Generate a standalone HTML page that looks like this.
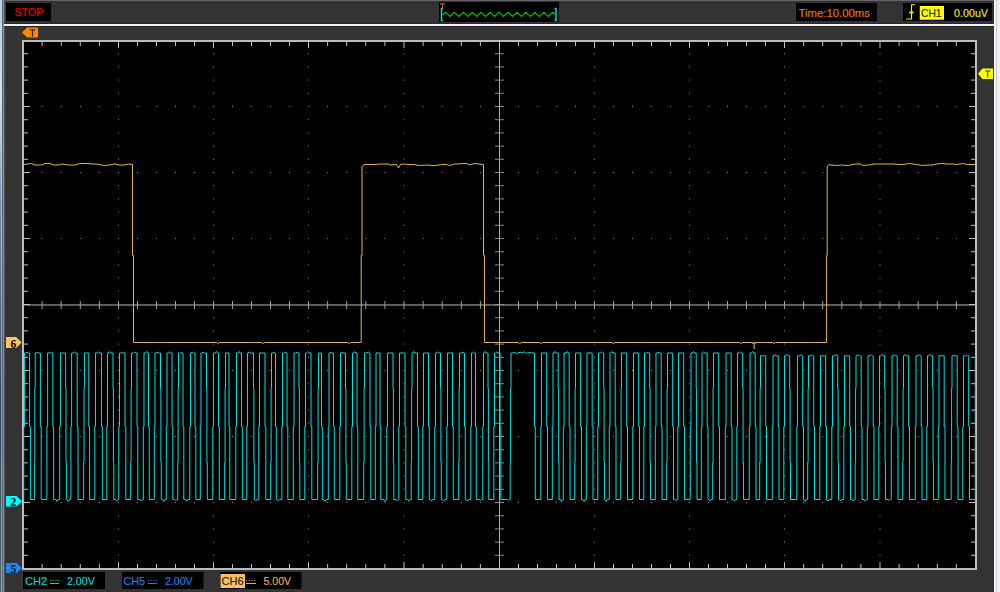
<!DOCTYPE html>
<html><head><meta charset="utf-8">
<style>
html,body{margin:0;padding:0}
body{width:1000px;height:592px;overflow:hidden;background:#333;position:relative;font-family:"Liberation Sans",sans-serif}
.a{position:absolute}
svg{position:absolute;left:0;top:0}
</style></head><body>
<div class="a" style="left:0;top:0;width:1px;height:592px;background:linear-gradient(#b8cce4,#dce4ec 100px,#7890a8 200px,#304860 400px,#506070)"></div>
<div class="a" style="left:1px;top:0;width:1px;height:592px;background:linear-gradient(#c8d4e0,#d0d8e0 100px,#a8b8c8 200px,#8898a8 400px,#98a0a8)"></div>
<div class="a" style="left:2px;top:0;width:1px;height:592px;background:#5a6878"></div>
<div class="a" style="left:3px;top:0;width:1px;height:592px;background:#8c8c8c"></div>
<div class="a" style="left:4px;top:0;width:1px;height:592px;background:#505050"></div>
<div class="a" style="left:5px;top:0;width:1px;height:592px;background:#3a3a3a"></div>
<div class="a" style="left:4px;top:0;width:990px;height:1px;background:#666"></div>
<div class="a" style="left:4px;top:23px;width:990px;height:1px;background:#2a2a2a"></div>
<div class="a" style="left:4px;top:24px;width:990px;height:2px;background:#f0f0f0"></div>
<div class="a" style="left:4px;top:26px;width:990px;height:1px;background:#282828"></div>
<div class="a" style="left:994px;top:0;width:2px;height:592px;background:#f4f4f4"></div>
<div class="a" style="left:996px;top:0;width:1px;height:592px;background:#c8ccd4"></div>
<div class="a" style="left:997px;top:0;width:3px;height:592px;background:#f0f0f0"></div>
<svg width="1000" height="592" viewBox="0 0 1000 592">
<!-- top boxes -->
<rect x="6" y="3" width="45" height="18" fill="#000"/>
<text x="14.6" y="16" font-size="10.6" fill="#e80000" stroke="#e80000" stroke-width="0.2" textLength="28.6" lengthAdjust="spacingAndGlyphs">STOP</text>
<rect x="439" y="2" width="120" height="20" fill="#000"/>
<path d="M440 3.8H445M442.6 3.8V8" stroke="#c06000" stroke-width="1.3" fill="none"/>
<path d="M443 8.5H441.5V20.5H443M554.5 8.5H556V20.5H554.5" stroke="#00d8e8" stroke-width="1.5" fill="none"/>
<path d="M442.5 15 L445.5 12.25 L449.97 16.5 L454.44 12.25 L458.91 16.5 L463.38 12.25 L467.85 16.5 L472.32 12.25 L476.79 16.5 L481.26 12.25 L485.73 16.5 L490.2 12.25 L494.67 16.5 L499.14 12.25 L503.61 16.5 L508.08 12.25 L512.55 16.5 L517.02 12.25 L521.49 16.5 L525.96 12.25 L530.43 16.5 L534.9 12.25 L539.37 16.5 L543.84 12.25 L548.31 16.5 L552.78 12.25 L557.25 16.5" stroke="#00c000" stroke-width="1.1" fill="none"/>
<rect x="796" y="3" width="81" height="18" fill="#000"/>
<text x="798.5" y="16.5" font-size="10.5" fill="#e87800" stroke="#e87800" stroke-width="0.15" textLength="71.5" lengthAdjust="spacingAndGlyphs">Time:10.00ms</text>
<rect x="903" y="3" width="89" height="18" fill="#000"/>
<path d="M915 4.75H911.5V19H906.25" stroke="#f0f000" stroke-width="1.2" fill="none"/>
<path d="M911.5 10.5L914.5 13.2H908.25Z" fill="#f0f000"/>
<rect x="919.75" y="6" width="24.25" height="13.75" fill="#ffff00"/>
<text x="921" y="16.75" font-size="10.5" fill="#202000" stroke="#202000" stroke-width="0.15" textLength="20.5" lengthAdjust="spacingAndGlyphs">CH1</text>
<text x="954" y="16.75" font-size="10.5" fill="#e8e800" stroke="#e8e800" stroke-width="0.15" textLength="34" lengthAdjust="spacingAndGlyphs">0.00uV</text>
<!-- plot -->
<rect x="24" y="42" width="951" height="526" fill="#000"/>
<rect x="118" y="53.2" width="1" height="1" fill="#8a8a8a"/>
<rect x="118" y="66.4" width="1" height="1" fill="#8a8a8a"/>
<rect x="118" y="79.6" width="1" height="1" fill="#8a8a8a"/>
<rect x="118" y="92.8" width="1" height="1" fill="#8a8a8a"/>
<rect x="118" y="106" width="1" height="1" fill="#8a8a8a"/>
<rect x="118" y="119.2" width="1" height="1" fill="#8a8a8a"/>
<rect x="118" y="132.4" width="1" height="1" fill="#8a8a8a"/>
<rect x="118" y="145.6" width="1" height="1" fill="#8a8a8a"/>
<rect x="118" y="158.8" width="1" height="1" fill="#8a8a8a"/>
<rect x="118" y="172" width="1" height="1" fill="#8a8a8a"/>
<rect x="118" y="185.2" width="1" height="1" fill="#8a8a8a"/>
<rect x="118" y="198.4" width="1" height="1" fill="#8a8a8a"/>
<rect x="118" y="211.6" width="1" height="1" fill="#8a8a8a"/>
<rect x="118" y="224.8" width="1" height="1" fill="#8a8a8a"/>
<rect x="118" y="238" width="1" height="1" fill="#8a8a8a"/>
<rect x="118" y="251.2" width="1" height="1" fill="#8a8a8a"/>
<rect x="118" y="264.4" width="1" height="1" fill="#8a8a8a"/>
<rect x="118" y="277.6" width="1" height="1" fill="#8a8a8a"/>
<rect x="118" y="290.8" width="1" height="1" fill="#8a8a8a"/>
<rect x="118" y="304" width="1" height="1" fill="#8a8a8a"/>
<rect x="118" y="317.2" width="1" height="1" fill="#8a8a8a"/>
<rect x="118" y="330.4" width="1" height="1" fill="#8a8a8a"/>
<rect x="118" y="343.6" width="1" height="1" fill="#8a8a8a"/>
<rect x="118" y="356.8" width="1" height="1" fill="#8a8a8a"/>
<rect x="118" y="370" width="1" height="1" fill="#8a8a8a"/>
<rect x="118" y="383.2" width="1" height="1" fill="#8a8a8a"/>
<rect x="118" y="396.4" width="1" height="1" fill="#8a8a8a"/>
<rect x="118" y="409.6" width="1" height="1" fill="#8a8a8a"/>
<rect x="118" y="422.8" width="1" height="1" fill="#8a8a8a"/>
<rect x="118" y="436" width="1" height="1" fill="#8a8a8a"/>
<rect x="118" y="449.2" width="1" height="1" fill="#8a8a8a"/>
<rect x="118" y="462.4" width="1" height="1" fill="#8a8a8a"/>
<rect x="118" y="475.6" width="1" height="1" fill="#8a8a8a"/>
<rect x="118" y="488.8" width="1" height="1" fill="#8a8a8a"/>
<rect x="118" y="502" width="1" height="1" fill="#8a8a8a"/>
<rect x="118" y="515.2" width="1" height="1" fill="#8a8a8a"/>
<rect x="118" y="528.4" width="1" height="1" fill="#8a8a8a"/>
<rect x="118" y="541.6" width="1" height="1" fill="#8a8a8a"/>
<rect x="118" y="554.8" width="1" height="1" fill="#8a8a8a"/>
<rect x="213" y="53.2" width="1" height="1" fill="#8a8a8a"/>
<rect x="213" y="66.4" width="1" height="1" fill="#8a8a8a"/>
<rect x="213" y="79.6" width="1" height="1" fill="#8a8a8a"/>
<rect x="213" y="92.8" width="1" height="1" fill="#8a8a8a"/>
<rect x="213" y="106" width="1" height="1" fill="#8a8a8a"/>
<rect x="213" y="119.2" width="1" height="1" fill="#8a8a8a"/>
<rect x="213" y="132.4" width="1" height="1" fill="#8a8a8a"/>
<rect x="213" y="145.6" width="1" height="1" fill="#8a8a8a"/>
<rect x="213" y="158.8" width="1" height="1" fill="#8a8a8a"/>
<rect x="213" y="172" width="1" height="1" fill="#8a8a8a"/>
<rect x="213" y="185.2" width="1" height="1" fill="#8a8a8a"/>
<rect x="213" y="198.4" width="1" height="1" fill="#8a8a8a"/>
<rect x="213" y="211.6" width="1" height="1" fill="#8a8a8a"/>
<rect x="213" y="224.8" width="1" height="1" fill="#8a8a8a"/>
<rect x="213" y="238" width="1" height="1" fill="#8a8a8a"/>
<rect x="213" y="251.2" width="1" height="1" fill="#8a8a8a"/>
<rect x="213" y="264.4" width="1" height="1" fill="#8a8a8a"/>
<rect x="213" y="277.6" width="1" height="1" fill="#8a8a8a"/>
<rect x="213" y="290.8" width="1" height="1" fill="#8a8a8a"/>
<rect x="213" y="304" width="1" height="1" fill="#8a8a8a"/>
<rect x="213" y="317.2" width="1" height="1" fill="#8a8a8a"/>
<rect x="213" y="330.4" width="1" height="1" fill="#8a8a8a"/>
<rect x="213" y="343.6" width="1" height="1" fill="#8a8a8a"/>
<rect x="213" y="356.8" width="1" height="1" fill="#8a8a8a"/>
<rect x="213" y="370" width="1" height="1" fill="#8a8a8a"/>
<rect x="213" y="383.2" width="1" height="1" fill="#8a8a8a"/>
<rect x="213" y="396.4" width="1" height="1" fill="#8a8a8a"/>
<rect x="213" y="409.6" width="1" height="1" fill="#8a8a8a"/>
<rect x="213" y="422.8" width="1" height="1" fill="#8a8a8a"/>
<rect x="213" y="436" width="1" height="1" fill="#8a8a8a"/>
<rect x="213" y="449.2" width="1" height="1" fill="#8a8a8a"/>
<rect x="213" y="462.4" width="1" height="1" fill="#8a8a8a"/>
<rect x="213" y="475.6" width="1" height="1" fill="#8a8a8a"/>
<rect x="213" y="488.8" width="1" height="1" fill="#8a8a8a"/>
<rect x="213" y="502" width="1" height="1" fill="#8a8a8a"/>
<rect x="213" y="515.2" width="1" height="1" fill="#8a8a8a"/>
<rect x="213" y="528.4" width="1" height="1" fill="#8a8a8a"/>
<rect x="213" y="541.6" width="1" height="1" fill="#8a8a8a"/>
<rect x="213" y="554.8" width="1" height="1" fill="#8a8a8a"/>
<rect x="308" y="53.2" width="1" height="1" fill="#8a8a8a"/>
<rect x="308" y="66.4" width="1" height="1" fill="#8a8a8a"/>
<rect x="308" y="79.6" width="1" height="1" fill="#8a8a8a"/>
<rect x="308" y="92.8" width="1" height="1" fill="#8a8a8a"/>
<rect x="308" y="106" width="1" height="1" fill="#8a8a8a"/>
<rect x="308" y="119.2" width="1" height="1" fill="#8a8a8a"/>
<rect x="308" y="132.4" width="1" height="1" fill="#8a8a8a"/>
<rect x="308" y="145.6" width="1" height="1" fill="#8a8a8a"/>
<rect x="308" y="158.8" width="1" height="1" fill="#8a8a8a"/>
<rect x="308" y="172" width="1" height="1" fill="#8a8a8a"/>
<rect x="308" y="185.2" width="1" height="1" fill="#8a8a8a"/>
<rect x="308" y="198.4" width="1" height="1" fill="#8a8a8a"/>
<rect x="308" y="211.6" width="1" height="1" fill="#8a8a8a"/>
<rect x="308" y="224.8" width="1" height="1" fill="#8a8a8a"/>
<rect x="308" y="238" width="1" height="1" fill="#8a8a8a"/>
<rect x="308" y="251.2" width="1" height="1" fill="#8a8a8a"/>
<rect x="308" y="264.4" width="1" height="1" fill="#8a8a8a"/>
<rect x="308" y="277.6" width="1" height="1" fill="#8a8a8a"/>
<rect x="308" y="290.8" width="1" height="1" fill="#8a8a8a"/>
<rect x="308" y="304" width="1" height="1" fill="#8a8a8a"/>
<rect x="308" y="317.2" width="1" height="1" fill="#8a8a8a"/>
<rect x="308" y="330.4" width="1" height="1" fill="#8a8a8a"/>
<rect x="308" y="343.6" width="1" height="1" fill="#8a8a8a"/>
<rect x="308" y="356.8" width="1" height="1" fill="#8a8a8a"/>
<rect x="308" y="370" width="1" height="1" fill="#8a8a8a"/>
<rect x="308" y="383.2" width="1" height="1" fill="#8a8a8a"/>
<rect x="308" y="396.4" width="1" height="1" fill="#8a8a8a"/>
<rect x="308" y="409.6" width="1" height="1" fill="#8a8a8a"/>
<rect x="308" y="422.8" width="1" height="1" fill="#8a8a8a"/>
<rect x="308" y="436" width="1" height="1" fill="#8a8a8a"/>
<rect x="308" y="449.2" width="1" height="1" fill="#8a8a8a"/>
<rect x="308" y="462.4" width="1" height="1" fill="#8a8a8a"/>
<rect x="308" y="475.6" width="1" height="1" fill="#8a8a8a"/>
<rect x="308" y="488.8" width="1" height="1" fill="#8a8a8a"/>
<rect x="308" y="502" width="1" height="1" fill="#8a8a8a"/>
<rect x="308" y="515.2" width="1" height="1" fill="#8a8a8a"/>
<rect x="308" y="528.4" width="1" height="1" fill="#8a8a8a"/>
<rect x="308" y="541.6" width="1" height="1" fill="#8a8a8a"/>
<rect x="308" y="554.8" width="1" height="1" fill="#8a8a8a"/>
<rect x="403.5" y="53.2" width="1" height="1" fill="#8a8a8a"/>
<rect x="403.5" y="66.4" width="1" height="1" fill="#8a8a8a"/>
<rect x="403.5" y="79.6" width="1" height="1" fill="#8a8a8a"/>
<rect x="403.5" y="92.8" width="1" height="1" fill="#8a8a8a"/>
<rect x="403.5" y="106" width="1" height="1" fill="#8a8a8a"/>
<rect x="403.5" y="119.2" width="1" height="1" fill="#8a8a8a"/>
<rect x="403.5" y="132.4" width="1" height="1" fill="#8a8a8a"/>
<rect x="403.5" y="145.6" width="1" height="1" fill="#8a8a8a"/>
<rect x="403.5" y="158.8" width="1" height="1" fill="#8a8a8a"/>
<rect x="403.5" y="172" width="1" height="1" fill="#8a8a8a"/>
<rect x="403.5" y="185.2" width="1" height="1" fill="#8a8a8a"/>
<rect x="403.5" y="198.4" width="1" height="1" fill="#8a8a8a"/>
<rect x="403.5" y="211.6" width="1" height="1" fill="#8a8a8a"/>
<rect x="403.5" y="224.8" width="1" height="1" fill="#8a8a8a"/>
<rect x="403.5" y="238" width="1" height="1" fill="#8a8a8a"/>
<rect x="403.5" y="251.2" width="1" height="1" fill="#8a8a8a"/>
<rect x="403.5" y="264.4" width="1" height="1" fill="#8a8a8a"/>
<rect x="403.5" y="277.6" width="1" height="1" fill="#8a8a8a"/>
<rect x="403.5" y="290.8" width="1" height="1" fill="#8a8a8a"/>
<rect x="403.5" y="304" width="1" height="1" fill="#8a8a8a"/>
<rect x="403.5" y="317.2" width="1" height="1" fill="#8a8a8a"/>
<rect x="403.5" y="330.4" width="1" height="1" fill="#8a8a8a"/>
<rect x="403.5" y="343.6" width="1" height="1" fill="#8a8a8a"/>
<rect x="403.5" y="356.8" width="1" height="1" fill="#8a8a8a"/>
<rect x="403.5" y="370" width="1" height="1" fill="#8a8a8a"/>
<rect x="403.5" y="383.2" width="1" height="1" fill="#8a8a8a"/>
<rect x="403.5" y="396.4" width="1" height="1" fill="#8a8a8a"/>
<rect x="403.5" y="409.6" width="1" height="1" fill="#8a8a8a"/>
<rect x="403.5" y="422.8" width="1" height="1" fill="#8a8a8a"/>
<rect x="403.5" y="436" width="1" height="1" fill="#8a8a8a"/>
<rect x="403.5" y="449.2" width="1" height="1" fill="#8a8a8a"/>
<rect x="403.5" y="462.4" width="1" height="1" fill="#8a8a8a"/>
<rect x="403.5" y="475.6" width="1" height="1" fill="#8a8a8a"/>
<rect x="403.5" y="488.8" width="1" height="1" fill="#8a8a8a"/>
<rect x="403.5" y="502" width="1" height="1" fill="#8a8a8a"/>
<rect x="403.5" y="515.2" width="1" height="1" fill="#8a8a8a"/>
<rect x="403.5" y="528.4" width="1" height="1" fill="#8a8a8a"/>
<rect x="403.5" y="541.6" width="1" height="1" fill="#8a8a8a"/>
<rect x="403.5" y="554.8" width="1" height="1" fill="#8a8a8a"/>
<rect x="594" y="53.2" width="1" height="1" fill="#8a8a8a"/>
<rect x="594" y="66.4" width="1" height="1" fill="#8a8a8a"/>
<rect x="594" y="79.6" width="1" height="1" fill="#8a8a8a"/>
<rect x="594" y="92.8" width="1" height="1" fill="#8a8a8a"/>
<rect x="594" y="106" width="1" height="1" fill="#8a8a8a"/>
<rect x="594" y="119.2" width="1" height="1" fill="#8a8a8a"/>
<rect x="594" y="132.4" width="1" height="1" fill="#8a8a8a"/>
<rect x="594" y="145.6" width="1" height="1" fill="#8a8a8a"/>
<rect x="594" y="158.8" width="1" height="1" fill="#8a8a8a"/>
<rect x="594" y="172" width="1" height="1" fill="#8a8a8a"/>
<rect x="594" y="185.2" width="1" height="1" fill="#8a8a8a"/>
<rect x="594" y="198.4" width="1" height="1" fill="#8a8a8a"/>
<rect x="594" y="211.6" width="1" height="1" fill="#8a8a8a"/>
<rect x="594" y="224.8" width="1" height="1" fill="#8a8a8a"/>
<rect x="594" y="238" width="1" height="1" fill="#8a8a8a"/>
<rect x="594" y="251.2" width="1" height="1" fill="#8a8a8a"/>
<rect x="594" y="264.4" width="1" height="1" fill="#8a8a8a"/>
<rect x="594" y="277.6" width="1" height="1" fill="#8a8a8a"/>
<rect x="594" y="290.8" width="1" height="1" fill="#8a8a8a"/>
<rect x="594" y="304" width="1" height="1" fill="#8a8a8a"/>
<rect x="594" y="317.2" width="1" height="1" fill="#8a8a8a"/>
<rect x="594" y="330.4" width="1" height="1" fill="#8a8a8a"/>
<rect x="594" y="343.6" width="1" height="1" fill="#8a8a8a"/>
<rect x="594" y="356.8" width="1" height="1" fill="#8a8a8a"/>
<rect x="594" y="370" width="1" height="1" fill="#8a8a8a"/>
<rect x="594" y="383.2" width="1" height="1" fill="#8a8a8a"/>
<rect x="594" y="396.4" width="1" height="1" fill="#8a8a8a"/>
<rect x="594" y="409.6" width="1" height="1" fill="#8a8a8a"/>
<rect x="594" y="422.8" width="1" height="1" fill="#8a8a8a"/>
<rect x="594" y="436" width="1" height="1" fill="#8a8a8a"/>
<rect x="594" y="449.2" width="1" height="1" fill="#8a8a8a"/>
<rect x="594" y="462.4" width="1" height="1" fill="#8a8a8a"/>
<rect x="594" y="475.6" width="1" height="1" fill="#8a8a8a"/>
<rect x="594" y="488.8" width="1" height="1" fill="#8a8a8a"/>
<rect x="594" y="502" width="1" height="1" fill="#8a8a8a"/>
<rect x="594" y="515.2" width="1" height="1" fill="#8a8a8a"/>
<rect x="594" y="528.4" width="1" height="1" fill="#8a8a8a"/>
<rect x="594" y="541.6" width="1" height="1" fill="#8a8a8a"/>
<rect x="594" y="554.8" width="1" height="1" fill="#8a8a8a"/>
<rect x="689" y="53.2" width="1" height="1" fill="#8a8a8a"/>
<rect x="689" y="66.4" width="1" height="1" fill="#8a8a8a"/>
<rect x="689" y="79.6" width="1" height="1" fill="#8a8a8a"/>
<rect x="689" y="92.8" width="1" height="1" fill="#8a8a8a"/>
<rect x="689" y="106" width="1" height="1" fill="#8a8a8a"/>
<rect x="689" y="119.2" width="1" height="1" fill="#8a8a8a"/>
<rect x="689" y="132.4" width="1" height="1" fill="#8a8a8a"/>
<rect x="689" y="145.6" width="1" height="1" fill="#8a8a8a"/>
<rect x="689" y="158.8" width="1" height="1" fill="#8a8a8a"/>
<rect x="689" y="172" width="1" height="1" fill="#8a8a8a"/>
<rect x="689" y="185.2" width="1" height="1" fill="#8a8a8a"/>
<rect x="689" y="198.4" width="1" height="1" fill="#8a8a8a"/>
<rect x="689" y="211.6" width="1" height="1" fill="#8a8a8a"/>
<rect x="689" y="224.8" width="1" height="1" fill="#8a8a8a"/>
<rect x="689" y="238" width="1" height="1" fill="#8a8a8a"/>
<rect x="689" y="251.2" width="1" height="1" fill="#8a8a8a"/>
<rect x="689" y="264.4" width="1" height="1" fill="#8a8a8a"/>
<rect x="689" y="277.6" width="1" height="1" fill="#8a8a8a"/>
<rect x="689" y="290.8" width="1" height="1" fill="#8a8a8a"/>
<rect x="689" y="304" width="1" height="1" fill="#8a8a8a"/>
<rect x="689" y="317.2" width="1" height="1" fill="#8a8a8a"/>
<rect x="689" y="330.4" width="1" height="1" fill="#8a8a8a"/>
<rect x="689" y="343.6" width="1" height="1" fill="#8a8a8a"/>
<rect x="689" y="356.8" width="1" height="1" fill="#8a8a8a"/>
<rect x="689" y="370" width="1" height="1" fill="#8a8a8a"/>
<rect x="689" y="383.2" width="1" height="1" fill="#8a8a8a"/>
<rect x="689" y="396.4" width="1" height="1" fill="#8a8a8a"/>
<rect x="689" y="409.6" width="1" height="1" fill="#8a8a8a"/>
<rect x="689" y="422.8" width="1" height="1" fill="#8a8a8a"/>
<rect x="689" y="436" width="1" height="1" fill="#8a8a8a"/>
<rect x="689" y="449.2" width="1" height="1" fill="#8a8a8a"/>
<rect x="689" y="462.4" width="1" height="1" fill="#8a8a8a"/>
<rect x="689" y="475.6" width="1" height="1" fill="#8a8a8a"/>
<rect x="689" y="488.8" width="1" height="1" fill="#8a8a8a"/>
<rect x="689" y="502" width="1" height="1" fill="#8a8a8a"/>
<rect x="689" y="515.2" width="1" height="1" fill="#8a8a8a"/>
<rect x="689" y="528.4" width="1" height="1" fill="#8a8a8a"/>
<rect x="689" y="541.6" width="1" height="1" fill="#8a8a8a"/>
<rect x="689" y="554.8" width="1" height="1" fill="#8a8a8a"/>
<rect x="784" y="53.2" width="1" height="1" fill="#8a8a8a"/>
<rect x="784" y="66.4" width="1" height="1" fill="#8a8a8a"/>
<rect x="784" y="79.6" width="1" height="1" fill="#8a8a8a"/>
<rect x="784" y="92.8" width="1" height="1" fill="#8a8a8a"/>
<rect x="784" y="106" width="1" height="1" fill="#8a8a8a"/>
<rect x="784" y="119.2" width="1" height="1" fill="#8a8a8a"/>
<rect x="784" y="132.4" width="1" height="1" fill="#8a8a8a"/>
<rect x="784" y="145.6" width="1" height="1" fill="#8a8a8a"/>
<rect x="784" y="158.8" width="1" height="1" fill="#8a8a8a"/>
<rect x="784" y="172" width="1" height="1" fill="#8a8a8a"/>
<rect x="784" y="185.2" width="1" height="1" fill="#8a8a8a"/>
<rect x="784" y="198.4" width="1" height="1" fill="#8a8a8a"/>
<rect x="784" y="211.6" width="1" height="1" fill="#8a8a8a"/>
<rect x="784" y="224.8" width="1" height="1" fill="#8a8a8a"/>
<rect x="784" y="238" width="1" height="1" fill="#8a8a8a"/>
<rect x="784" y="251.2" width="1" height="1" fill="#8a8a8a"/>
<rect x="784" y="264.4" width="1" height="1" fill="#8a8a8a"/>
<rect x="784" y="277.6" width="1" height="1" fill="#8a8a8a"/>
<rect x="784" y="290.8" width="1" height="1" fill="#8a8a8a"/>
<rect x="784" y="304" width="1" height="1" fill="#8a8a8a"/>
<rect x="784" y="317.2" width="1" height="1" fill="#8a8a8a"/>
<rect x="784" y="330.4" width="1" height="1" fill="#8a8a8a"/>
<rect x="784" y="343.6" width="1" height="1" fill="#8a8a8a"/>
<rect x="784" y="356.8" width="1" height="1" fill="#8a8a8a"/>
<rect x="784" y="370" width="1" height="1" fill="#8a8a8a"/>
<rect x="784" y="383.2" width="1" height="1" fill="#8a8a8a"/>
<rect x="784" y="396.4" width="1" height="1" fill="#8a8a8a"/>
<rect x="784" y="409.6" width="1" height="1" fill="#8a8a8a"/>
<rect x="784" y="422.8" width="1" height="1" fill="#8a8a8a"/>
<rect x="784" y="436" width="1" height="1" fill="#8a8a8a"/>
<rect x="784" y="449.2" width="1" height="1" fill="#8a8a8a"/>
<rect x="784" y="462.4" width="1" height="1" fill="#8a8a8a"/>
<rect x="784" y="475.6" width="1" height="1" fill="#8a8a8a"/>
<rect x="784" y="488.8" width="1" height="1" fill="#8a8a8a"/>
<rect x="784" y="502" width="1" height="1" fill="#8a8a8a"/>
<rect x="784" y="515.2" width="1" height="1" fill="#8a8a8a"/>
<rect x="784" y="528.4" width="1" height="1" fill="#8a8a8a"/>
<rect x="784" y="541.6" width="1" height="1" fill="#8a8a8a"/>
<rect x="784" y="554.8" width="1" height="1" fill="#8a8a8a"/>
<rect x="879.5" y="53.2" width="1" height="1" fill="#8a8a8a"/>
<rect x="879.5" y="66.4" width="1" height="1" fill="#8a8a8a"/>
<rect x="879.5" y="79.6" width="1" height="1" fill="#8a8a8a"/>
<rect x="879.5" y="92.8" width="1" height="1" fill="#8a8a8a"/>
<rect x="879.5" y="106" width="1" height="1" fill="#8a8a8a"/>
<rect x="879.5" y="119.2" width="1" height="1" fill="#8a8a8a"/>
<rect x="879.5" y="132.4" width="1" height="1" fill="#8a8a8a"/>
<rect x="879.5" y="145.6" width="1" height="1" fill="#8a8a8a"/>
<rect x="879.5" y="158.8" width="1" height="1" fill="#8a8a8a"/>
<rect x="879.5" y="172" width="1" height="1" fill="#8a8a8a"/>
<rect x="879.5" y="185.2" width="1" height="1" fill="#8a8a8a"/>
<rect x="879.5" y="198.4" width="1" height="1" fill="#8a8a8a"/>
<rect x="879.5" y="211.6" width="1" height="1" fill="#8a8a8a"/>
<rect x="879.5" y="224.8" width="1" height="1" fill="#8a8a8a"/>
<rect x="879.5" y="238" width="1" height="1" fill="#8a8a8a"/>
<rect x="879.5" y="251.2" width="1" height="1" fill="#8a8a8a"/>
<rect x="879.5" y="264.4" width="1" height="1" fill="#8a8a8a"/>
<rect x="879.5" y="277.6" width="1" height="1" fill="#8a8a8a"/>
<rect x="879.5" y="290.8" width="1" height="1" fill="#8a8a8a"/>
<rect x="879.5" y="304" width="1" height="1" fill="#8a8a8a"/>
<rect x="879.5" y="317.2" width="1" height="1" fill="#8a8a8a"/>
<rect x="879.5" y="330.4" width="1" height="1" fill="#8a8a8a"/>
<rect x="879.5" y="343.6" width="1" height="1" fill="#8a8a8a"/>
<rect x="879.5" y="356.8" width="1" height="1" fill="#8a8a8a"/>
<rect x="879.5" y="370" width="1" height="1" fill="#8a8a8a"/>
<rect x="879.5" y="383.2" width="1" height="1" fill="#8a8a8a"/>
<rect x="879.5" y="396.4" width="1" height="1" fill="#8a8a8a"/>
<rect x="879.5" y="409.6" width="1" height="1" fill="#8a8a8a"/>
<rect x="879.5" y="422.8" width="1" height="1" fill="#8a8a8a"/>
<rect x="879.5" y="436" width="1" height="1" fill="#8a8a8a"/>
<rect x="879.5" y="449.2" width="1" height="1" fill="#8a8a8a"/>
<rect x="879.5" y="462.4" width="1" height="1" fill="#8a8a8a"/>
<rect x="879.5" y="475.6" width="1" height="1" fill="#8a8a8a"/>
<rect x="879.5" y="488.8" width="1" height="1" fill="#8a8a8a"/>
<rect x="879.5" y="502" width="1" height="1" fill="#8a8a8a"/>
<rect x="879.5" y="515.2" width="1" height="1" fill="#8a8a8a"/>
<rect x="879.5" y="528.4" width="1" height="1" fill="#8a8a8a"/>
<rect x="879.5" y="541.6" width="1" height="1" fill="#8a8a8a"/>
<rect x="879.5" y="554.8" width="1" height="1" fill="#8a8a8a"/>
<rect x="41.6" y="106" width="1" height="1" fill="#8a8a8a"/>
<rect x="60.7" y="106" width="1" height="1" fill="#8a8a8a"/>
<rect x="79.8" y="106" width="1" height="1" fill="#8a8a8a"/>
<rect x="98.9" y="106" width="1" height="1" fill="#8a8a8a"/>
<rect x="137" y="106" width="1" height="1" fill="#8a8a8a"/>
<rect x="156" y="106" width="1" height="1" fill="#8a8a8a"/>
<rect x="175" y="106" width="1" height="1" fill="#8a8a8a"/>
<rect x="194" y="106" width="1" height="1" fill="#8a8a8a"/>
<rect x="232" y="106" width="1" height="1" fill="#8a8a8a"/>
<rect x="251" y="106" width="1" height="1" fill="#8a8a8a"/>
<rect x="270" y="106" width="1" height="1" fill="#8a8a8a"/>
<rect x="289" y="106" width="1" height="1" fill="#8a8a8a"/>
<rect x="327.1" y="106" width="1" height="1" fill="#8a8a8a"/>
<rect x="346.2" y="106" width="1" height="1" fill="#8a8a8a"/>
<rect x="365.3" y="106" width="1" height="1" fill="#8a8a8a"/>
<rect x="384.4" y="106" width="1" height="1" fill="#8a8a8a"/>
<rect x="422.6" y="106" width="1" height="1" fill="#8a8a8a"/>
<rect x="441.7" y="106" width="1" height="1" fill="#8a8a8a"/>
<rect x="460.8" y="106" width="1" height="1" fill="#8a8a8a"/>
<rect x="479.9" y="106" width="1" height="1" fill="#8a8a8a"/>
<rect x="518" y="106" width="1" height="1" fill="#8a8a8a"/>
<rect x="537" y="106" width="1" height="1" fill="#8a8a8a"/>
<rect x="556" y="106" width="1" height="1" fill="#8a8a8a"/>
<rect x="575" y="106" width="1" height="1" fill="#8a8a8a"/>
<rect x="613" y="106" width="1" height="1" fill="#8a8a8a"/>
<rect x="632" y="106" width="1" height="1" fill="#8a8a8a"/>
<rect x="651" y="106" width="1" height="1" fill="#8a8a8a"/>
<rect x="670" y="106" width="1" height="1" fill="#8a8a8a"/>
<rect x="708" y="106" width="1" height="1" fill="#8a8a8a"/>
<rect x="727" y="106" width="1" height="1" fill="#8a8a8a"/>
<rect x="746" y="106" width="1" height="1" fill="#8a8a8a"/>
<rect x="765" y="106" width="1" height="1" fill="#8a8a8a"/>
<rect x="803.1" y="106" width="1" height="1" fill="#8a8a8a"/>
<rect x="822.2" y="106" width="1" height="1" fill="#8a8a8a"/>
<rect x="841.3" y="106" width="1" height="1" fill="#8a8a8a"/>
<rect x="860.4" y="106" width="1" height="1" fill="#8a8a8a"/>
<rect x="898.6" y="106" width="1" height="1" fill="#8a8a8a"/>
<rect x="917.7" y="106" width="1" height="1" fill="#8a8a8a"/>
<rect x="936.8" y="106" width="1" height="1" fill="#8a8a8a"/>
<rect x="955.9" y="106" width="1" height="1" fill="#8a8a8a"/>
<rect x="41.6" y="172" width="1" height="1" fill="#8a8a8a"/>
<rect x="60.7" y="172" width="1" height="1" fill="#8a8a8a"/>
<rect x="79.8" y="172" width="1" height="1" fill="#8a8a8a"/>
<rect x="98.9" y="172" width="1" height="1" fill="#8a8a8a"/>
<rect x="137" y="172" width="1" height="1" fill="#8a8a8a"/>
<rect x="156" y="172" width="1" height="1" fill="#8a8a8a"/>
<rect x="175" y="172" width="1" height="1" fill="#8a8a8a"/>
<rect x="194" y="172" width="1" height="1" fill="#8a8a8a"/>
<rect x="232" y="172" width="1" height="1" fill="#8a8a8a"/>
<rect x="251" y="172" width="1" height="1" fill="#8a8a8a"/>
<rect x="270" y="172" width="1" height="1" fill="#8a8a8a"/>
<rect x="289" y="172" width="1" height="1" fill="#8a8a8a"/>
<rect x="327.1" y="172" width="1" height="1" fill="#8a8a8a"/>
<rect x="346.2" y="172" width="1" height="1" fill="#8a8a8a"/>
<rect x="365.3" y="172" width="1" height="1" fill="#8a8a8a"/>
<rect x="384.4" y="172" width="1" height="1" fill="#8a8a8a"/>
<rect x="422.6" y="172" width="1" height="1" fill="#8a8a8a"/>
<rect x="441.7" y="172" width="1" height="1" fill="#8a8a8a"/>
<rect x="460.8" y="172" width="1" height="1" fill="#8a8a8a"/>
<rect x="479.9" y="172" width="1" height="1" fill="#8a8a8a"/>
<rect x="518" y="172" width="1" height="1" fill="#8a8a8a"/>
<rect x="537" y="172" width="1" height="1" fill="#8a8a8a"/>
<rect x="556" y="172" width="1" height="1" fill="#8a8a8a"/>
<rect x="575" y="172" width="1" height="1" fill="#8a8a8a"/>
<rect x="613" y="172" width="1" height="1" fill="#8a8a8a"/>
<rect x="632" y="172" width="1" height="1" fill="#8a8a8a"/>
<rect x="651" y="172" width="1" height="1" fill="#8a8a8a"/>
<rect x="670" y="172" width="1" height="1" fill="#8a8a8a"/>
<rect x="708" y="172" width="1" height="1" fill="#8a8a8a"/>
<rect x="727" y="172" width="1" height="1" fill="#8a8a8a"/>
<rect x="746" y="172" width="1" height="1" fill="#8a8a8a"/>
<rect x="765" y="172" width="1" height="1" fill="#8a8a8a"/>
<rect x="803.1" y="172" width="1" height="1" fill="#8a8a8a"/>
<rect x="822.2" y="172" width="1" height="1" fill="#8a8a8a"/>
<rect x="841.3" y="172" width="1" height="1" fill="#8a8a8a"/>
<rect x="860.4" y="172" width="1" height="1" fill="#8a8a8a"/>
<rect x="898.6" y="172" width="1" height="1" fill="#8a8a8a"/>
<rect x="917.7" y="172" width="1" height="1" fill="#8a8a8a"/>
<rect x="936.8" y="172" width="1" height="1" fill="#8a8a8a"/>
<rect x="955.9" y="172" width="1" height="1" fill="#8a8a8a"/>
<rect x="41.6" y="238" width="1" height="1" fill="#8a8a8a"/>
<rect x="60.7" y="238" width="1" height="1" fill="#8a8a8a"/>
<rect x="79.8" y="238" width="1" height="1" fill="#8a8a8a"/>
<rect x="98.9" y="238" width="1" height="1" fill="#8a8a8a"/>
<rect x="137" y="238" width="1" height="1" fill="#8a8a8a"/>
<rect x="156" y="238" width="1" height="1" fill="#8a8a8a"/>
<rect x="175" y="238" width="1" height="1" fill="#8a8a8a"/>
<rect x="194" y="238" width="1" height="1" fill="#8a8a8a"/>
<rect x="232" y="238" width="1" height="1" fill="#8a8a8a"/>
<rect x="251" y="238" width="1" height="1" fill="#8a8a8a"/>
<rect x="270" y="238" width="1" height="1" fill="#8a8a8a"/>
<rect x="289" y="238" width="1" height="1" fill="#8a8a8a"/>
<rect x="327.1" y="238" width="1" height="1" fill="#8a8a8a"/>
<rect x="346.2" y="238" width="1" height="1" fill="#8a8a8a"/>
<rect x="365.3" y="238" width="1" height="1" fill="#8a8a8a"/>
<rect x="384.4" y="238" width="1" height="1" fill="#8a8a8a"/>
<rect x="422.6" y="238" width="1" height="1" fill="#8a8a8a"/>
<rect x="441.7" y="238" width="1" height="1" fill="#8a8a8a"/>
<rect x="460.8" y="238" width="1" height="1" fill="#8a8a8a"/>
<rect x="479.9" y="238" width="1" height="1" fill="#8a8a8a"/>
<rect x="518" y="238" width="1" height="1" fill="#8a8a8a"/>
<rect x="537" y="238" width="1" height="1" fill="#8a8a8a"/>
<rect x="556" y="238" width="1" height="1" fill="#8a8a8a"/>
<rect x="575" y="238" width="1" height="1" fill="#8a8a8a"/>
<rect x="613" y="238" width="1" height="1" fill="#8a8a8a"/>
<rect x="632" y="238" width="1" height="1" fill="#8a8a8a"/>
<rect x="651" y="238" width="1" height="1" fill="#8a8a8a"/>
<rect x="670" y="238" width="1" height="1" fill="#8a8a8a"/>
<rect x="708" y="238" width="1" height="1" fill="#8a8a8a"/>
<rect x="727" y="238" width="1" height="1" fill="#8a8a8a"/>
<rect x="746" y="238" width="1" height="1" fill="#8a8a8a"/>
<rect x="765" y="238" width="1" height="1" fill="#8a8a8a"/>
<rect x="803.1" y="238" width="1" height="1" fill="#8a8a8a"/>
<rect x="822.2" y="238" width="1" height="1" fill="#8a8a8a"/>
<rect x="841.3" y="238" width="1" height="1" fill="#8a8a8a"/>
<rect x="860.4" y="238" width="1" height="1" fill="#8a8a8a"/>
<rect x="898.6" y="238" width="1" height="1" fill="#8a8a8a"/>
<rect x="917.7" y="238" width="1" height="1" fill="#8a8a8a"/>
<rect x="936.8" y="238" width="1" height="1" fill="#8a8a8a"/>
<rect x="955.9" y="238" width="1" height="1" fill="#8a8a8a"/>
<rect x="41.6" y="370" width="1" height="1" fill="#8a8a8a"/>
<rect x="60.7" y="370" width="1" height="1" fill="#8a8a8a"/>
<rect x="79.8" y="370" width="1" height="1" fill="#8a8a8a"/>
<rect x="98.9" y="370" width="1" height="1" fill="#8a8a8a"/>
<rect x="137" y="370" width="1" height="1" fill="#8a8a8a"/>
<rect x="156" y="370" width="1" height="1" fill="#8a8a8a"/>
<rect x="175" y="370" width="1" height="1" fill="#8a8a8a"/>
<rect x="194" y="370" width="1" height="1" fill="#8a8a8a"/>
<rect x="232" y="370" width="1" height="1" fill="#8a8a8a"/>
<rect x="251" y="370" width="1" height="1" fill="#8a8a8a"/>
<rect x="270" y="370" width="1" height="1" fill="#8a8a8a"/>
<rect x="289" y="370" width="1" height="1" fill="#8a8a8a"/>
<rect x="327.1" y="370" width="1" height="1" fill="#8a8a8a"/>
<rect x="346.2" y="370" width="1" height="1" fill="#8a8a8a"/>
<rect x="365.3" y="370" width="1" height="1" fill="#8a8a8a"/>
<rect x="384.4" y="370" width="1" height="1" fill="#8a8a8a"/>
<rect x="422.6" y="370" width="1" height="1" fill="#8a8a8a"/>
<rect x="441.7" y="370" width="1" height="1" fill="#8a8a8a"/>
<rect x="460.8" y="370" width="1" height="1" fill="#8a8a8a"/>
<rect x="479.9" y="370" width="1" height="1" fill="#8a8a8a"/>
<rect x="518" y="370" width="1" height="1" fill="#8a8a8a"/>
<rect x="537" y="370" width="1" height="1" fill="#8a8a8a"/>
<rect x="556" y="370" width="1" height="1" fill="#8a8a8a"/>
<rect x="575" y="370" width="1" height="1" fill="#8a8a8a"/>
<rect x="613" y="370" width="1" height="1" fill="#8a8a8a"/>
<rect x="632" y="370" width="1" height="1" fill="#8a8a8a"/>
<rect x="651" y="370" width="1" height="1" fill="#8a8a8a"/>
<rect x="670" y="370" width="1" height="1" fill="#8a8a8a"/>
<rect x="708" y="370" width="1" height="1" fill="#8a8a8a"/>
<rect x="727" y="370" width="1" height="1" fill="#8a8a8a"/>
<rect x="746" y="370" width="1" height="1" fill="#8a8a8a"/>
<rect x="765" y="370" width="1" height="1" fill="#8a8a8a"/>
<rect x="803.1" y="370" width="1" height="1" fill="#8a8a8a"/>
<rect x="822.2" y="370" width="1" height="1" fill="#8a8a8a"/>
<rect x="841.3" y="370" width="1" height="1" fill="#8a8a8a"/>
<rect x="860.4" y="370" width="1" height="1" fill="#8a8a8a"/>
<rect x="898.6" y="370" width="1" height="1" fill="#8a8a8a"/>
<rect x="917.7" y="370" width="1" height="1" fill="#8a8a8a"/>
<rect x="936.8" y="370" width="1" height="1" fill="#8a8a8a"/>
<rect x="955.9" y="370" width="1" height="1" fill="#8a8a8a"/>
<rect x="41.6" y="436" width="1" height="1" fill="#8a8a8a"/>
<rect x="60.7" y="436" width="1" height="1" fill="#8a8a8a"/>
<rect x="79.8" y="436" width="1" height="1" fill="#8a8a8a"/>
<rect x="98.9" y="436" width="1" height="1" fill="#8a8a8a"/>
<rect x="137" y="436" width="1" height="1" fill="#8a8a8a"/>
<rect x="156" y="436" width="1" height="1" fill="#8a8a8a"/>
<rect x="175" y="436" width="1" height="1" fill="#8a8a8a"/>
<rect x="194" y="436" width="1" height="1" fill="#8a8a8a"/>
<rect x="232" y="436" width="1" height="1" fill="#8a8a8a"/>
<rect x="251" y="436" width="1" height="1" fill="#8a8a8a"/>
<rect x="270" y="436" width="1" height="1" fill="#8a8a8a"/>
<rect x="289" y="436" width="1" height="1" fill="#8a8a8a"/>
<rect x="327.1" y="436" width="1" height="1" fill="#8a8a8a"/>
<rect x="346.2" y="436" width="1" height="1" fill="#8a8a8a"/>
<rect x="365.3" y="436" width="1" height="1" fill="#8a8a8a"/>
<rect x="384.4" y="436" width="1" height="1" fill="#8a8a8a"/>
<rect x="422.6" y="436" width="1" height="1" fill="#8a8a8a"/>
<rect x="441.7" y="436" width="1" height="1" fill="#8a8a8a"/>
<rect x="460.8" y="436" width="1" height="1" fill="#8a8a8a"/>
<rect x="479.9" y="436" width="1" height="1" fill="#8a8a8a"/>
<rect x="518" y="436" width="1" height="1" fill="#8a8a8a"/>
<rect x="537" y="436" width="1" height="1" fill="#8a8a8a"/>
<rect x="556" y="436" width="1" height="1" fill="#8a8a8a"/>
<rect x="575" y="436" width="1" height="1" fill="#8a8a8a"/>
<rect x="613" y="436" width="1" height="1" fill="#8a8a8a"/>
<rect x="632" y="436" width="1" height="1" fill="#8a8a8a"/>
<rect x="651" y="436" width="1" height="1" fill="#8a8a8a"/>
<rect x="670" y="436" width="1" height="1" fill="#8a8a8a"/>
<rect x="708" y="436" width="1" height="1" fill="#8a8a8a"/>
<rect x="727" y="436" width="1" height="1" fill="#8a8a8a"/>
<rect x="746" y="436" width="1" height="1" fill="#8a8a8a"/>
<rect x="765" y="436" width="1" height="1" fill="#8a8a8a"/>
<rect x="803.1" y="436" width="1" height="1" fill="#8a8a8a"/>
<rect x="822.2" y="436" width="1" height="1" fill="#8a8a8a"/>
<rect x="841.3" y="436" width="1" height="1" fill="#8a8a8a"/>
<rect x="860.4" y="436" width="1" height="1" fill="#8a8a8a"/>
<rect x="898.6" y="436" width="1" height="1" fill="#8a8a8a"/>
<rect x="917.7" y="436" width="1" height="1" fill="#8a8a8a"/>
<rect x="936.8" y="436" width="1" height="1" fill="#8a8a8a"/>
<rect x="955.9" y="436" width="1" height="1" fill="#8a8a8a"/>
<rect x="41.6" y="502" width="1" height="1" fill="#8a8a8a"/>
<rect x="60.7" y="502" width="1" height="1" fill="#8a8a8a"/>
<rect x="79.8" y="502" width="1" height="1" fill="#8a8a8a"/>
<rect x="98.9" y="502" width="1" height="1" fill="#8a8a8a"/>
<rect x="137" y="502" width="1" height="1" fill="#8a8a8a"/>
<rect x="156" y="502" width="1" height="1" fill="#8a8a8a"/>
<rect x="175" y="502" width="1" height="1" fill="#8a8a8a"/>
<rect x="194" y="502" width="1" height="1" fill="#8a8a8a"/>
<rect x="232" y="502" width="1" height="1" fill="#8a8a8a"/>
<rect x="251" y="502" width="1" height="1" fill="#8a8a8a"/>
<rect x="270" y="502" width="1" height="1" fill="#8a8a8a"/>
<rect x="289" y="502" width="1" height="1" fill="#8a8a8a"/>
<rect x="327.1" y="502" width="1" height="1" fill="#8a8a8a"/>
<rect x="346.2" y="502" width="1" height="1" fill="#8a8a8a"/>
<rect x="365.3" y="502" width="1" height="1" fill="#8a8a8a"/>
<rect x="384.4" y="502" width="1" height="1" fill="#8a8a8a"/>
<rect x="422.6" y="502" width="1" height="1" fill="#8a8a8a"/>
<rect x="441.7" y="502" width="1" height="1" fill="#8a8a8a"/>
<rect x="460.8" y="502" width="1" height="1" fill="#8a8a8a"/>
<rect x="479.9" y="502" width="1" height="1" fill="#8a8a8a"/>
<rect x="518" y="502" width="1" height="1" fill="#8a8a8a"/>
<rect x="537" y="502" width="1" height="1" fill="#8a8a8a"/>
<rect x="556" y="502" width="1" height="1" fill="#8a8a8a"/>
<rect x="575" y="502" width="1" height="1" fill="#8a8a8a"/>
<rect x="613" y="502" width="1" height="1" fill="#8a8a8a"/>
<rect x="632" y="502" width="1" height="1" fill="#8a8a8a"/>
<rect x="651" y="502" width="1" height="1" fill="#8a8a8a"/>
<rect x="670" y="502" width="1" height="1" fill="#8a8a8a"/>
<rect x="708" y="502" width="1" height="1" fill="#8a8a8a"/>
<rect x="727" y="502" width="1" height="1" fill="#8a8a8a"/>
<rect x="746" y="502" width="1" height="1" fill="#8a8a8a"/>
<rect x="765" y="502" width="1" height="1" fill="#8a8a8a"/>
<rect x="803.1" y="502" width="1" height="1" fill="#8a8a8a"/>
<rect x="822.2" y="502" width="1" height="1" fill="#8a8a8a"/>
<rect x="841.3" y="502" width="1" height="1" fill="#8a8a8a"/>
<rect x="860.4" y="502" width="1" height="1" fill="#8a8a8a"/>
<rect x="898.6" y="502" width="1" height="1" fill="#8a8a8a"/>
<rect x="917.7" y="502" width="1" height="1" fill="#8a8a8a"/>
<rect x="936.8" y="502" width="1" height="1" fill="#8a8a8a"/>
<rect x="955.9" y="502" width="1" height="1" fill="#8a8a8a"/>
<rect x="499" y="42" width="1" height="526" fill="#b0b0b0"/>
<rect x="24" y="304" width="951" height="1" fill="#626262"/><rect x="24" y="305" width="951" height="1" fill="#585858"/>
<rect x="495" y="53.2" width="9" height="1" fill="#8c8c8c"/>
<rect x="495" y="66.4" width="9" height="1" fill="#8c8c8c"/>
<rect x="495" y="79.6" width="9" height="1" fill="#8c8c8c"/>
<rect x="495" y="92.8" width="9" height="1" fill="#8c8c8c"/>
<rect x="495" y="106" width="9" height="1" fill="#8c8c8c"/>
<rect x="495" y="119.2" width="9" height="1" fill="#8c8c8c"/>
<rect x="495" y="132.4" width="9" height="1" fill="#8c8c8c"/>
<rect x="495" y="145.6" width="9" height="1" fill="#8c8c8c"/>
<rect x="495" y="158.8" width="9" height="1" fill="#8c8c8c"/>
<rect x="495" y="172" width="9" height="1" fill="#8c8c8c"/>
<rect x="495" y="185.2" width="9" height="1" fill="#8c8c8c"/>
<rect x="495" y="198.4" width="9" height="1" fill="#8c8c8c"/>
<rect x="495" y="211.6" width="9" height="1" fill="#8c8c8c"/>
<rect x="495" y="224.8" width="9" height="1" fill="#8c8c8c"/>
<rect x="495" y="238" width="9" height="1" fill="#8c8c8c"/>
<rect x="495" y="251.2" width="9" height="1" fill="#8c8c8c"/>
<rect x="495" y="264.4" width="9" height="1" fill="#8c8c8c"/>
<rect x="495" y="277.6" width="9" height="1" fill="#8c8c8c"/>
<rect x="495" y="290.8" width="9" height="1" fill="#8c8c8c"/>
<rect x="495" y="304" width="9" height="1" fill="#8c8c8c"/>
<rect x="495" y="317.2" width="9" height="1" fill="#8c8c8c"/>
<rect x="495" y="330.4" width="9" height="1" fill="#8c8c8c"/>
<rect x="495" y="343.6" width="9" height="1" fill="#8c8c8c"/>
<rect x="495" y="356.8" width="9" height="1" fill="#8c8c8c"/>
<rect x="495" y="370" width="9" height="1" fill="#8c8c8c"/>
<rect x="495" y="383.2" width="9" height="1" fill="#8c8c8c"/>
<rect x="495" y="396.4" width="9" height="1" fill="#8c8c8c"/>
<rect x="495" y="409.6" width="9" height="1" fill="#8c8c8c"/>
<rect x="495" y="422.8" width="9" height="1" fill="#8c8c8c"/>
<rect x="495" y="436" width="9" height="1" fill="#8c8c8c"/>
<rect x="495" y="449.2" width="9" height="1" fill="#8c8c8c"/>
<rect x="495" y="462.4" width="9" height="1" fill="#8c8c8c"/>
<rect x="495" y="475.6" width="9" height="1" fill="#8c8c8c"/>
<rect x="495" y="488.8" width="9" height="1" fill="#8c8c8c"/>
<rect x="495" y="502" width="9" height="1" fill="#8c8c8c"/>
<rect x="495" y="515.2" width="9" height="1" fill="#8c8c8c"/>
<rect x="495" y="528.4" width="9" height="1" fill="#8c8c8c"/>
<rect x="495" y="541.6" width="9" height="1" fill="#8c8c8c"/>
<rect x="495" y="554.8" width="9" height="1" fill="#8c8c8c"/>
<rect x="41.6" y="301" width="1" height="8" fill="#a0a0a0"/>
<rect x="60.7" y="301" width="1" height="8" fill="#a0a0a0"/>
<rect x="79.8" y="301" width="1" height="8" fill="#a0a0a0"/>
<rect x="98.9" y="301" width="1" height="8" fill="#a0a0a0"/>
<rect x="118" y="301" width="1" height="8" fill="#a0a0a0"/>
<rect x="137" y="301" width="1" height="8" fill="#a0a0a0"/>
<rect x="156" y="301" width="1" height="8" fill="#a0a0a0"/>
<rect x="175" y="301" width="1" height="8" fill="#a0a0a0"/>
<rect x="194" y="301" width="1" height="8" fill="#a0a0a0"/>
<rect x="213" y="301" width="1" height="8" fill="#a0a0a0"/>
<rect x="232" y="301" width="1" height="8" fill="#a0a0a0"/>
<rect x="251" y="301" width="1" height="8" fill="#a0a0a0"/>
<rect x="270" y="301" width="1" height="8" fill="#a0a0a0"/>
<rect x="289" y="301" width="1" height="8" fill="#a0a0a0"/>
<rect x="308" y="301" width="1" height="8" fill="#a0a0a0"/>
<rect x="327.1" y="301" width="1" height="8" fill="#a0a0a0"/>
<rect x="346.2" y="301" width="1" height="8" fill="#a0a0a0"/>
<rect x="365.3" y="301" width="1" height="8" fill="#a0a0a0"/>
<rect x="384.4" y="301" width="1" height="8" fill="#a0a0a0"/>
<rect x="403.5" y="301" width="1" height="8" fill="#a0a0a0"/>
<rect x="422.6" y="301" width="1" height="8" fill="#a0a0a0"/>
<rect x="441.7" y="301" width="1" height="8" fill="#a0a0a0"/>
<rect x="460.8" y="301" width="1" height="8" fill="#a0a0a0"/>
<rect x="479.9" y="301" width="1" height="8" fill="#a0a0a0"/>
<rect x="499" y="301" width="1" height="8" fill="#a0a0a0"/>
<rect x="518" y="301" width="1" height="8" fill="#a0a0a0"/>
<rect x="537" y="301" width="1" height="8" fill="#a0a0a0"/>
<rect x="556" y="301" width="1" height="8" fill="#a0a0a0"/>
<rect x="575" y="301" width="1" height="8" fill="#a0a0a0"/>
<rect x="594" y="301" width="1" height="8" fill="#a0a0a0"/>
<rect x="613" y="301" width="1" height="8" fill="#a0a0a0"/>
<rect x="632" y="301" width="1" height="8" fill="#a0a0a0"/>
<rect x="651" y="301" width="1" height="8" fill="#a0a0a0"/>
<rect x="670" y="301" width="1" height="8" fill="#a0a0a0"/>
<rect x="689" y="301" width="1" height="8" fill="#a0a0a0"/>
<rect x="708" y="301" width="1" height="8" fill="#a0a0a0"/>
<rect x="727" y="301" width="1" height="8" fill="#a0a0a0"/>
<rect x="746" y="301" width="1" height="8" fill="#a0a0a0"/>
<rect x="765" y="301" width="1" height="8" fill="#a0a0a0"/>
<rect x="784" y="301" width="1" height="8" fill="#a0a0a0"/>
<rect x="803.1" y="301" width="1" height="8" fill="#a0a0a0"/>
<rect x="822.2" y="301" width="1" height="8" fill="#a0a0a0"/>
<rect x="841.3" y="301" width="1" height="8" fill="#a0a0a0"/>
<rect x="860.4" y="301" width="1" height="8" fill="#a0a0a0"/>
<rect x="879.5" y="301" width="1" height="8" fill="#a0a0a0"/>
<rect x="898.6" y="301" width="1" height="8" fill="#a0a0a0"/>
<rect x="917.7" y="301" width="1" height="8" fill="#a0a0a0"/>
<rect x="936.8" y="301" width="1" height="8" fill="#a0a0a0"/>
<rect x="955.9" y="301" width="1" height="8" fill="#a0a0a0"/>
<rect x="41.6" y="42" width="1" height="4" fill="#c0c0c0"/>
<rect x="41.6" y="564" width="1" height="4" fill="#c0c0c0"/>
<rect x="60.7" y="42" width="1" height="4" fill="#c0c0c0"/>
<rect x="60.7" y="564" width="1" height="4" fill="#c0c0c0"/>
<rect x="79.8" y="42" width="1" height="4" fill="#c0c0c0"/>
<rect x="79.8" y="564" width="1" height="4" fill="#c0c0c0"/>
<rect x="98.9" y="42" width="1" height="4" fill="#c0c0c0"/>
<rect x="98.9" y="564" width="1" height="4" fill="#c0c0c0"/>
<rect x="118" y="42" width="1" height="6" fill="#c0c0c0"/>
<rect x="118" y="562" width="1" height="6" fill="#c0c0c0"/>
<rect x="137" y="42" width="1" height="4" fill="#c0c0c0"/>
<rect x="137" y="564" width="1" height="4" fill="#c0c0c0"/>
<rect x="156" y="42" width="1" height="4" fill="#c0c0c0"/>
<rect x="156" y="564" width="1" height="4" fill="#c0c0c0"/>
<rect x="175" y="42" width="1" height="4" fill="#c0c0c0"/>
<rect x="175" y="564" width="1" height="4" fill="#c0c0c0"/>
<rect x="194" y="42" width="1" height="4" fill="#c0c0c0"/>
<rect x="194" y="564" width="1" height="4" fill="#c0c0c0"/>
<rect x="213" y="42" width="1" height="6" fill="#c0c0c0"/>
<rect x="213" y="562" width="1" height="6" fill="#c0c0c0"/>
<rect x="232" y="42" width="1" height="4" fill="#c0c0c0"/>
<rect x="232" y="564" width="1" height="4" fill="#c0c0c0"/>
<rect x="251" y="42" width="1" height="4" fill="#c0c0c0"/>
<rect x="251" y="564" width="1" height="4" fill="#c0c0c0"/>
<rect x="270" y="42" width="1" height="4" fill="#c0c0c0"/>
<rect x="270" y="564" width="1" height="4" fill="#c0c0c0"/>
<rect x="289" y="42" width="1" height="4" fill="#c0c0c0"/>
<rect x="289" y="564" width="1" height="4" fill="#c0c0c0"/>
<rect x="308" y="42" width="1" height="6" fill="#c0c0c0"/>
<rect x="308" y="562" width="1" height="6" fill="#c0c0c0"/>
<rect x="327.1" y="42" width="1" height="4" fill="#c0c0c0"/>
<rect x="327.1" y="564" width="1" height="4" fill="#c0c0c0"/>
<rect x="346.2" y="42" width="1" height="4" fill="#c0c0c0"/>
<rect x="346.2" y="564" width="1" height="4" fill="#c0c0c0"/>
<rect x="365.3" y="42" width="1" height="4" fill="#c0c0c0"/>
<rect x="365.3" y="564" width="1" height="4" fill="#c0c0c0"/>
<rect x="384.4" y="42" width="1" height="4" fill="#c0c0c0"/>
<rect x="384.4" y="564" width="1" height="4" fill="#c0c0c0"/>
<rect x="403.5" y="42" width="1" height="6" fill="#c0c0c0"/>
<rect x="403.5" y="562" width="1" height="6" fill="#c0c0c0"/>
<rect x="422.6" y="42" width="1" height="4" fill="#c0c0c0"/>
<rect x="422.6" y="564" width="1" height="4" fill="#c0c0c0"/>
<rect x="441.7" y="42" width="1" height="4" fill="#c0c0c0"/>
<rect x="441.7" y="564" width="1" height="4" fill="#c0c0c0"/>
<rect x="460.8" y="42" width="1" height="4" fill="#c0c0c0"/>
<rect x="460.8" y="564" width="1" height="4" fill="#c0c0c0"/>
<rect x="479.9" y="42" width="1" height="4" fill="#c0c0c0"/>
<rect x="479.9" y="564" width="1" height="4" fill="#c0c0c0"/>
<rect x="499" y="42" width="1" height="6" fill="#c0c0c0"/>
<rect x="499" y="562" width="1" height="6" fill="#c0c0c0"/>
<rect x="518" y="42" width="1" height="4" fill="#c0c0c0"/>
<rect x="518" y="564" width="1" height="4" fill="#c0c0c0"/>
<rect x="537" y="42" width="1" height="4" fill="#c0c0c0"/>
<rect x="537" y="564" width="1" height="4" fill="#c0c0c0"/>
<rect x="556" y="42" width="1" height="4" fill="#c0c0c0"/>
<rect x="556" y="564" width="1" height="4" fill="#c0c0c0"/>
<rect x="575" y="42" width="1" height="4" fill="#c0c0c0"/>
<rect x="575" y="564" width="1" height="4" fill="#c0c0c0"/>
<rect x="594" y="42" width="1" height="6" fill="#c0c0c0"/>
<rect x="594" y="562" width="1" height="6" fill="#c0c0c0"/>
<rect x="613" y="42" width="1" height="4" fill="#c0c0c0"/>
<rect x="613" y="564" width="1" height="4" fill="#c0c0c0"/>
<rect x="632" y="42" width="1" height="4" fill="#c0c0c0"/>
<rect x="632" y="564" width="1" height="4" fill="#c0c0c0"/>
<rect x="651" y="42" width="1" height="4" fill="#c0c0c0"/>
<rect x="651" y="564" width="1" height="4" fill="#c0c0c0"/>
<rect x="670" y="42" width="1" height="4" fill="#c0c0c0"/>
<rect x="670" y="564" width="1" height="4" fill="#c0c0c0"/>
<rect x="689" y="42" width="1" height="6" fill="#c0c0c0"/>
<rect x="689" y="562" width="1" height="6" fill="#c0c0c0"/>
<rect x="708" y="42" width="1" height="4" fill="#c0c0c0"/>
<rect x="708" y="564" width="1" height="4" fill="#c0c0c0"/>
<rect x="727" y="42" width="1" height="4" fill="#c0c0c0"/>
<rect x="727" y="564" width="1" height="4" fill="#c0c0c0"/>
<rect x="746" y="42" width="1" height="4" fill="#c0c0c0"/>
<rect x="746" y="564" width="1" height="4" fill="#c0c0c0"/>
<rect x="765" y="42" width="1" height="4" fill="#c0c0c0"/>
<rect x="765" y="564" width="1" height="4" fill="#c0c0c0"/>
<rect x="784" y="42" width="1" height="6" fill="#c0c0c0"/>
<rect x="784" y="562" width="1" height="6" fill="#c0c0c0"/>
<rect x="803.1" y="42" width="1" height="4" fill="#c0c0c0"/>
<rect x="803.1" y="564" width="1" height="4" fill="#c0c0c0"/>
<rect x="822.2" y="42" width="1" height="4" fill="#c0c0c0"/>
<rect x="822.2" y="564" width="1" height="4" fill="#c0c0c0"/>
<rect x="841.3" y="42" width="1" height="4" fill="#c0c0c0"/>
<rect x="841.3" y="564" width="1" height="4" fill="#c0c0c0"/>
<rect x="860.4" y="42" width="1" height="4" fill="#c0c0c0"/>
<rect x="860.4" y="564" width="1" height="4" fill="#c0c0c0"/>
<rect x="879.5" y="42" width="1" height="6" fill="#c0c0c0"/>
<rect x="879.5" y="562" width="1" height="6" fill="#c0c0c0"/>
<rect x="898.6" y="42" width="1" height="4" fill="#c0c0c0"/>
<rect x="898.6" y="564" width="1" height="4" fill="#c0c0c0"/>
<rect x="917.7" y="42" width="1" height="4" fill="#c0c0c0"/>
<rect x="917.7" y="564" width="1" height="4" fill="#c0c0c0"/>
<rect x="936.8" y="42" width="1" height="4" fill="#c0c0c0"/>
<rect x="936.8" y="564" width="1" height="4" fill="#c0c0c0"/>
<rect x="955.9" y="42" width="1" height="4" fill="#c0c0c0"/>
<rect x="955.9" y="564" width="1" height="4" fill="#c0c0c0"/>
<rect x="24" y="53.2" width="4" height="1" fill="#c0c0c0"/>
<rect x="971" y="53.2" width="4" height="1" fill="#c0c0c0"/>
<rect x="24" y="66.4" width="4" height="1" fill="#c0c0c0"/>
<rect x="971" y="66.4" width="4" height="1" fill="#c0c0c0"/>
<rect x="24" y="79.6" width="4" height="1" fill="#c0c0c0"/>
<rect x="971" y="79.6" width="4" height="1" fill="#c0c0c0"/>
<rect x="24" y="92.8" width="4" height="1" fill="#c0c0c0"/>
<rect x="971" y="92.8" width="4" height="1" fill="#c0c0c0"/>
<rect x="24" y="106" width="6" height="1" fill="#c0c0c0"/>
<rect x="969" y="106" width="6" height="1" fill="#c0c0c0"/>
<rect x="24" y="119.2" width="4" height="1" fill="#c0c0c0"/>
<rect x="971" y="119.2" width="4" height="1" fill="#c0c0c0"/>
<rect x="24" y="132.4" width="4" height="1" fill="#c0c0c0"/>
<rect x="971" y="132.4" width="4" height="1" fill="#c0c0c0"/>
<rect x="24" y="145.6" width="4" height="1" fill="#c0c0c0"/>
<rect x="971" y="145.6" width="4" height="1" fill="#c0c0c0"/>
<rect x="24" y="158.8" width="4" height="1" fill="#c0c0c0"/>
<rect x="971" y="158.8" width="4" height="1" fill="#c0c0c0"/>
<rect x="24" y="172" width="6" height="1" fill="#c0c0c0"/>
<rect x="969" y="172" width="6" height="1" fill="#c0c0c0"/>
<rect x="24" y="185.2" width="4" height="1" fill="#c0c0c0"/>
<rect x="971" y="185.2" width="4" height="1" fill="#c0c0c0"/>
<rect x="24" y="198.4" width="4" height="1" fill="#c0c0c0"/>
<rect x="971" y="198.4" width="4" height="1" fill="#c0c0c0"/>
<rect x="24" y="211.6" width="4" height="1" fill="#c0c0c0"/>
<rect x="971" y="211.6" width="4" height="1" fill="#c0c0c0"/>
<rect x="24" y="224.8" width="4" height="1" fill="#c0c0c0"/>
<rect x="971" y="224.8" width="4" height="1" fill="#c0c0c0"/>
<rect x="24" y="238" width="6" height="1" fill="#c0c0c0"/>
<rect x="969" y="238" width="6" height="1" fill="#c0c0c0"/>
<rect x="24" y="251.2" width="4" height="1" fill="#c0c0c0"/>
<rect x="971" y="251.2" width="4" height="1" fill="#c0c0c0"/>
<rect x="24" y="264.4" width="4" height="1" fill="#c0c0c0"/>
<rect x="971" y="264.4" width="4" height="1" fill="#c0c0c0"/>
<rect x="24" y="277.6" width="4" height="1" fill="#c0c0c0"/>
<rect x="971" y="277.6" width="4" height="1" fill="#c0c0c0"/>
<rect x="24" y="290.8" width="4" height="1" fill="#c0c0c0"/>
<rect x="971" y="290.8" width="4" height="1" fill="#c0c0c0"/>
<rect x="24" y="304" width="6" height="1" fill="#c0c0c0"/>
<rect x="969" y="304" width="6" height="1" fill="#c0c0c0"/>
<rect x="24" y="317.2" width="4" height="1" fill="#c0c0c0"/>
<rect x="971" y="317.2" width="4" height="1" fill="#c0c0c0"/>
<rect x="24" y="330.4" width="4" height="1" fill="#c0c0c0"/>
<rect x="971" y="330.4" width="4" height="1" fill="#c0c0c0"/>
<rect x="24" y="343.6" width="4" height="1" fill="#c0c0c0"/>
<rect x="971" y="343.6" width="4" height="1" fill="#c0c0c0"/>
<rect x="24" y="356.8" width="4" height="1" fill="#c0c0c0"/>
<rect x="971" y="356.8" width="4" height="1" fill="#c0c0c0"/>
<rect x="24" y="370" width="6" height="1" fill="#c0c0c0"/>
<rect x="969" y="370" width="6" height="1" fill="#c0c0c0"/>
<rect x="24" y="383.2" width="4" height="1" fill="#c0c0c0"/>
<rect x="971" y="383.2" width="4" height="1" fill="#c0c0c0"/>
<rect x="24" y="396.4" width="4" height="1" fill="#c0c0c0"/>
<rect x="971" y="396.4" width="4" height="1" fill="#c0c0c0"/>
<rect x="24" y="409.6" width="4" height="1" fill="#c0c0c0"/>
<rect x="971" y="409.6" width="4" height="1" fill="#c0c0c0"/>
<rect x="24" y="422.8" width="4" height="1" fill="#c0c0c0"/>
<rect x="971" y="422.8" width="4" height="1" fill="#c0c0c0"/>
<rect x="24" y="436" width="6" height="1" fill="#c0c0c0"/>
<rect x="969" y="436" width="6" height="1" fill="#c0c0c0"/>
<rect x="24" y="449.2" width="4" height="1" fill="#c0c0c0"/>
<rect x="971" y="449.2" width="4" height="1" fill="#c0c0c0"/>
<rect x="24" y="462.4" width="4" height="1" fill="#c0c0c0"/>
<rect x="971" y="462.4" width="4" height="1" fill="#c0c0c0"/>
<rect x="24" y="475.6" width="4" height="1" fill="#c0c0c0"/>
<rect x="971" y="475.6" width="4" height="1" fill="#c0c0c0"/>
<rect x="24" y="488.8" width="4" height="1" fill="#c0c0c0"/>
<rect x="971" y="488.8" width="4" height="1" fill="#c0c0c0"/>
<rect x="24" y="502" width="6" height="1" fill="#c0c0c0"/>
<rect x="969" y="502" width="6" height="1" fill="#c0c0c0"/>
<rect x="24" y="515.2" width="4" height="1" fill="#c0c0c0"/>
<rect x="971" y="515.2" width="4" height="1" fill="#c0c0c0"/>
<rect x="24" y="528.4" width="4" height="1" fill="#c0c0c0"/>
<rect x="971" y="528.4" width="4" height="1" fill="#c0c0c0"/>
<rect x="24" y="541.6" width="4" height="1" fill="#c0c0c0"/>
<rect x="971" y="541.6" width="4" height="1" fill="#c0c0c0"/>
<rect x="24" y="554.8" width="4" height="1" fill="#c0c0c0"/>
<rect x="971" y="554.8" width="4" height="1" fill="#c0c0c0"/>
<rect x="22" y="40" width="955" height="2" fill="#bcbcbc"/>
<rect x="22" y="568" width="955" height="2" fill="#bcbcbc"/>
<rect x="22" y="40" width="2" height="530" fill="#bcbcbc"/>
<rect x="975" y="40" width="2" height="530" fill="#bcbcbc"/>
<path d="M24 164.5 L26.97 164 L31.55 163.5 L34.84 165 L38.22 165 L41.45 165 L45.31 163.5 L50.04 163.5 L54.01 165 L58.7 165 L62.2 164 L67.72 165 L74.51 165 L79.85 163.5 L86.76 163.5 L91.99 164 L96.14 164 L101.31 165 L105.54 165.5 L109.26 165 L114.55 164 L119.04 165 L124.89 165 L128.12 164 L132.5 164.5 L132.5 255.5 L133.5 255.5 L133.5 342.5 L151.71 342.5 L153.21 342.5 L154.71 342.5 L164.95 342.5 L166.45 342.5 L167.95 342.5 L216.57 342.5 L218.07 343.5 L219.57 342.5 L249.13 342.5 L250.63 342.5 L252.13 342.5 L261.7 342.5 L263.2 343.5 L264.7 342.5 L311.93 342.5 L313.43 342.5 L314.93 342.5 L347.73 342.5 L349.23 343.5 L350.73 342.5 L361.2 342.5 L361.2 255.5 L362 255.5 L362 167 L364 164.5 L368.12 164.5 L373.85 164.5 L380.68 164 L384.01 164 L387.94 164 L390.99 165 L396.5 164.5 L398.5 168 L400.5 164.5 L403.35 164 L408.02 164.5 L413.46 164.5 L420.27 165.5 L426.71 165 L432.33 165.5 L435.55 165.5 L441.74 164.5 L446.33 164.5 L449.74 165.5 L454.35 164 L457.61 164 L462.38 163.5 L466.74 163.5 L470.15 165 L473.75 163.5 L483.5 164.5 L483.5 255.5 L484.5 255.5 L484.5 342.5 L488.84 342.5 L490.34 342.5 L491.84 342.5 L518.29 342.5 L519.79 343.5 L521.29 342.5 L539.61 342.5 L541.11 343.5 L542.61 342.5 L612.02 342.5 L613.52 343.5 L615.02 342.5 L642.01 342.5 L643.51 342.5 L645.01 342.5 L711.87 342.5 L713.37 342.5 L714.87 342.5 L739.38 342.5 L740.88 343.5 L742.38 342.5 L759.8 342.5 L761.3 342.5 L762.8 342.5 L772.5 342.5 L774 343.5 L775.5 342.5 L807.38 342.5 L808.88 342.5 L810.38 342.5 L826.6 342.5 L826.6 255.5 L827.2 255.5 L827.2 167 L829 164.5 L831.08 165 L837.7 165.5 L841.29 165 L848.21 165.5 L854.96 164 L860.15 164 L863.24 165.5 L868.84 165 L874.83 164 L879.57 164 L885.87 164 L888.99 164 L893.16 164 L899.21 164.5 L903.25 164.5 L909.59 163.5 L916.23 164.5 L922.82 165.5 L928.15 165 L932.83 165 L936.36 164 L941.45 163.5 L947.94 164 L953.38 164 L957.07 164.5 L962.54 163.5 L967.77 164.5 L975 164.5" fill="none" stroke="#dfb55a" stroke-width="1"/>
<rect x="752" y="342" width="4" height="2" fill="#a08040"/><rect x="753.5" y="343" width="1.5" height="6" fill="#a08040"/>
<path d="M23.7 499.5 L23.7 426.5 L24.4 426.5 L24.4 353 L25.76 353 L26.96 352.3 L28.16 353 L29.6 353 L29.6 426.5 L30.4 426.5 L30.4 499.5 L34.4 499.5 L34.4 462.5 L34.8 462.5 L34.8 388.5 L35.2 388.5 L35.2 353 L35.92 353 L37.12 352.3 L38.32 353 L40.4 353 L40.4 426.5 L41.2 426.5 L41.2 499.5 L46.9 499.5 L46.9 426.5 L47.6 426.5 L47.6 353 L49.14 353 L50.34 352.3 L51.54 353 L52.8 353 L52.8 426.5 L53.6 426.5 L53.6 499.5 L55.8 499.5 L57 501.5 L58.2 499.5 L59.7 499.5 L59.7 426.5 L60.4 426.5 L60.4 353 L65.6 353 L65.6 388.5 L66 388.5 L66 462.5 L66.4 462.5 L66.4 499.5 L67.12 499.5 L68.32 501.5 L69.52 499.5 L70.9 499.5 L70.9 426.5 L71.6 426.5 L71.6 353 L73.14 353 L74.34 352 L75.54 353 L77.2 353 L77.2 426.5 L78 426.5 L78 499.5 L83.6 499.5 L83.6 462.5 L84 462.5 L84 388.5 L84.4 388.5 L84.4 353 L88.8 353 L88.8 426.5 L89.6 426.5 L89.6 499.5 L94.8 499.5 L94.8 426.5 L95.5 426.5 L95.5 353 L97.48 353 L98.68 352 L99.88 353 L101.5 353 L101.5 426.5 L102.3 426.5 L102.3 499.5 L106.8 499.5 L106.8 426.5 L107.5 426.5 L107.5 353 L108.1 353 L109.3 351.5 L110.5 353 L113 353 L113 388.5 L113.4 388.5 L113.4 462.5 L113.8 462.5 L113.8 499.5 L115.44 499.5 L116.64 501 L117.84 499.5 L118.8 499.5 L118.8 426.5 L119.5 426.5 L119.5 353 L121.47 353 L122.67 352.3 L123.87 353 L125 353 L125 426.5 L125.8 426.5 L125.8 499.5 L130.7 499.5 L130.7 462.5 L131.1 462.5 L131.1 388.5 L131.5 388.5 L131.5 353 L133.59 353 L134.79 352 L135.99 353 L137 353 L137 426.5 L137.8 426.5 L137.8 499.5 L140.31 499.5 L141.51 501 L142.71 499.5 L143.3 499.5 L143.3 426.5 L144 426.5 L144 353 L145.73 353 L146.93 351.5 L148.13 353 L148.5 353 L148.5 426.5 L149.3 426.5 L149.3 499.5 L154.3 499.5 L154.3 426.5 L155 426.5 L155 353 L156.97 353 L158.17 352 L159.37 353 L160.5 353 L160.5 388.5 L160.9 388.5 L160.9 462.5 L161.3 462.5 L161.3 499.5 L162.46 499.5 L163.66 501.5 L164.86 499.5 L166.3 499.5 L166.3 426.5 L167 426.5 L167 353 L168.14 353 L169.34 352 L170.54 353 L172 353 L172 426.5 L172.8 426.5 L172.8 499.5 L174.54 499.5 L175.74 500.5 L176.94 499.5 L177.7 499.5 L177.7 462.5 L178.1 462.5 L178.1 388.5 L178.5 388.5 L178.5 353 L179.49 353 L180.69 352.3 L181.89 353 L183 353 L183 426.5 L183.8 426.5 L183.8 499.5 L185.65 499.5 L186.85 501 L188.05 499.5 L189.8 499.5 L189.8 426.5 L190.5 426.5 L190.5 353 L190.9 353 L192.1 352 L193.3 353 L195 353 L195 426.5 L195.8 426.5 L195.8 499.5 L200.3 499.5 L200.3 426.5 L201 426.5 L201 353 L201.96 353 L203.16 352.3 L204.36 353 L206.5 353 L206.5 388.5 L206.9 388.5 L206.9 462.5 L207.3 462.5 L207.3 499.5 L212.8 499.5 L212.8 426.5 L213.5 426.5 L213.5 353 L215.31 353 L216.51 351.5 L217.71 353 L218.5 353 L218.5 426.5 L219.3 426.5 L219.3 499.5 L224.7 499.5 L224.7 462.5 L225.1 462.5 L225.1 388.5 L225.5 388.5 L225.5 353 L229 353 L229 426.5 L229.8 426.5 L229.8 499.5 L235.8 499.5 L235.8 426.5 L236.5 426.5 L236.5 353 L237.87 353 L239.07 351.5 L240.27 353 L241.5 353 L241.5 426.5 L242.3 426.5 L242.3 499.5 L246.8 499.5 L246.8 426.5 L247.5 426.5 L247.5 353 L247.97 353 L249.17 352 L250.37 353 L253.5 353 L253.5 388.5 L253.9 388.5 L253.9 462.5 L254.3 462.5 L254.3 499.5 L254.71 499.5 L255.91 500.5 L257.11 499.5 L258.8 499.5 L258.8 426.5 L259.5 426.5 L259.5 353 L265 353 L265 426.5 L265.8 426.5 L265.8 499.5 L270.7 499.5 L270.7 462.5 L271.1 462.5 L271.1 388.5 L271.5 388.5 L271.5 353 L272.66 353 L273.86 352.3 L275.06 353 L275.5 353 L275.5 426.5 L276.3 426.5 L276.3 499.5 L276.9 499.5 L278.1 500.5 L279.3 499.5 L281.8 499.5 L281.8 426.5 L282.5 426.5 L282.5 353 L283.63 353 L284.83 352 L286.03 353 L287 353 L287 426.5 L287.8 426.5 L287.8 499.5 L293.3 499.5 L293.3 426.5 L294 426.5 L294 353 L295.72 353 L296.92 352.3 L298.12 353 L299 353 L299 388.5 L299.4 388.5 L299.4 462.5 L299.8 462.5 L299.8 499.5 L304.8 499.5 L304.8 426.5 L305.5 426.5 L305.5 353 L306.25 353 L307.45 352 L308.65 353 L311 353 L311 426.5 L311.8 426.5 L311.8 499.5 L317.7 499.5 L317.7 462.5 L318.1 462.5 L318.1 388.5 L318.5 388.5 L318.5 353 L321.5 353 L321.5 426.5 L322.3 426.5 L322.3 499.5 L323.94 499.5 L325.14 501.5 L326.34 499.5 L328.3 499.5 L328.3 426.5 L329 426.5 L329 353 L329.82 353 L331.02 352.3 L332.22 353 L333.5 353 L333.5 426.5 L334.3 426.5 L334.3 499.5 L339.8 499.5 L339.8 426.5 L340.5 426.5 L340.5 353 L340.84 353 L342.04 352 L343.24 353 L345.5 353 L345.5 388.5 L345.9 388.5 L345.9 462.5 L346.3 462.5 L346.3 499.5 L351.8 499.5 L351.8 426.5 L352.5 426.5 L352.5 353 L353.47 353 L354.67 351.5 L355.87 353 L357 353 L357 426.5 L357.8 426.5 L357.8 499.5 L363.7 499.5 L363.7 462.5 L364.1 462.5 L364.1 388.5 L364.5 388.5 L364.5 353 L367.02 353 L368.22 352 L369.42 353 L370 353 L370 426.5 L370.8 426.5 L370.8 499.5 L375.3 499.5 L375.3 426.5 L376 426.5 L376 353 L380 353 L380 426.5 L380.8 426.5 L380.8 499.5 L383.6 499.5 L384.8 501.5 L386 499.5 L386.8 499.5 L386.8 426.5 L387.5 426.5 L387.5 353 L393 353 L393 388.5 L393.4 388.5 L393.4 462.5 L393.8 462.5 L393.8 499.5 L396.08 499.5 L397.28 500.5 L398.48 499.5 L398.8 499.5 L398.8 426.5 L399.5 426.5 L399.5 353 L405 353 L405 426.5 L405.8 426.5 L405.8 499.5 L407.66 499.5 L408.86 501 L410.06 499.5 L411.2 499.5 L411.2 462.5 L411.6 462.5 L411.6 388.5 L412 388.5 L412 353 L412.44 353 L413.64 351.5 L414.84 353 L417.5 353 L417.5 426.5 L418.3 426.5 L418.3 499.5 L422.8 499.5 L422.8 426.5 L423.5 426.5 L423.5 353 L428.5 353 L428.5 426.5 L429.3 426.5 L429.3 499.5 L430.21 499.5 L431.41 501 L432.61 499.5 L434.8 499.5 L434.8 426.5 L435.5 426.5 L435.5 353 L436.17 353 L437.37 352 L438.57 353 L440.5 353 L440.5 388.5 L440.9 388.5 L440.9 462.5 L441.3 462.5 L441.3 499.5 L442.26 499.5 L443.46 501 L444.66 499.5 L446.8 499.5 L446.8 426.5 L447.5 426.5 L447.5 353 L452.5 353 L452.5 426.5 L453.3 426.5 L453.3 499.5 L458.7 499.5 L458.7 462.5 L459.1 462.5 L459.1 388.5 L459.5 388.5 L459.5 353 L461.73 353 L462.93 352 L464.13 353 L464.5 353 L464.5 426.5 L465.3 426.5 L465.3 499.5 L466.06 499.5 L467.26 501 L468.46 499.5 L470.8 499.5 L470.8 426.5 L471.5 426.5 L471.5 353 L472.27 353 L473.47 352 L474.67 353 L475.5 353 L475.5 426.5 L476.3 426.5 L476.3 499.5 L479.32 499.5 L480.52 500.5 L481.72 499.5 L482.8 499.5 L482.8 426.5 L483.5 426.5 L483.5 353 L483.93 353 L485.13 351.5 L486.33 353 L488 353 L488 388.5 L488.4 388.5 L488.4 462.5 L488.8 462.5 L488.8 499.5 L493.8 499.5 L493.8 426.5 L494.5 426.5 L494.5 353 L495.55 353 L496.75 352 L497.95 353 L500 353 L500 426.5 L500.8 426.5 L500.8 499.5 L507.32 499.5 L508.52 500.5 L509.72 499.5 L510.2 499.5 L510.2 462.5 L510.6 462.5 L510.6 388.5 L511 388.5 L511 353 L515 352.8 L516.5 353.3 L520.5 352.2 L522 352.8 L524.6 351.9 L526.6 353.3 L529.3 352.4 L531.4 352.8 L534.5 353 L534.5 426.5 L535.3 426.5 L535.3 499.5 L540.8 499.5 L540.8 426.5 L541.5 426.5 L541.5 353 L546.7 353 L546.7 426.5 L547.5 426.5 L547.5 499.5 L552.3 499.5 L552.3 426.5 L553 426.5 L553 353 L554.02 353 L555.22 351.5 L556.42 353 L558.2 353 L558.2 388.5 L558.6 388.5 L558.6 462.5 L559 462.5 L559 499.5 L560.24 499.5 L561.44 501.5 L562.64 499.5 L563.3 499.5 L563.3 426.5 L564 426.5 L564 353 L566.11 353 L567.31 351.5 L568.51 353 L569.2 353 L569.2 426.5 L570 426.5 L570 499.5 L574.7 499.5 L574.7 462.5 L575.1 462.5 L575.1 388.5 L575.5 388.5 L575.5 353 L580.7 353 L580.7 426.5 L581.5 426.5 L581.5 499.5 L582.74 499.5 L583.94 501.5 L585.14 499.5 L586.3 499.5 L586.3 426.5 L587 426.5 L587 353 L592.2 353 L592.2 426.5 L593 426.5 L593 499.5 L597.8 499.5 L597.8 426.5 L598.5 426.5 L598.5 353 L600.31 353 L601.51 352 L602.71 353 L603.7 353 L603.7 388.5 L604.1 388.5 L604.1 462.5 L604.5 462.5 L604.5 499.5 L604.88 499.5 L606.08 501.5 L607.28 499.5 L609.3 499.5 L609.3 426.5 L610 426.5 L610 353 L610.53 353 L611.73 351.5 L612.93 353 L615.2 353 L615.2 426.5 L616 426.5 L616 499.5 L620.7 499.5 L620.7 462.5 L621.1 462.5 L621.1 388.5 L621.5 388.5 L621.5 353 L626.7 353 L626.7 426.5 L627.5 426.5 L627.5 499.5 L632.8 499.5 L632.8 426.5 L633.5 426.5 L633.5 353 L638.7 353 L638.7 426.5 L639.5 426.5 L639.5 499.5 L643.8 499.5 L643.8 426.5 L644.5 426.5 L644.5 353 L646.55 353 L647.75 352.3 L648.95 353 L649.7 353 L649.7 388.5 L650.1 388.5 L650.1 462.5 L650.5 462.5 L650.5 499.5 L655.3 499.5 L655.3 426.5 L656 426.5 L656 353 L657.92 353 L659.12 352 L660.32 353 L661.2 353 L661.2 426.5 L662 426.5 L662 499.5 L666.7 499.5 L666.7 462.5 L667.1 462.5 L667.1 388.5 L667.5 388.5 L667.5 353 L672.7 353 L672.7 426.5 L673.5 426.5 L673.5 499.5 L674.78 499.5 L675.98 500.5 L677.18 499.5 L677.8 499.5 L677.8 426.5 L678.5 426.5 L678.5 353 L683.7 353 L683.7 426.5 L684.5 426.5 L684.5 499.5 L690.3 499.5 L690.3 426.5 L691 426.5 L691 353 L692.14 353 L693.34 351.5 L694.54 353 L696.2 353 L696.2 388.5 L696.6 388.5 L696.6 462.5 L697 462.5 L697 499.5 L701.3 499.5 L701.3 426.5 L702 426.5 L702 353 L702.4 353 L703.6 352 L704.8 353 L707.2 353 L707.2 426.5 L708 426.5 L708 499.5 L708.57 499.5 L709.77 501 L710.97 499.5 L712.7 499.5 L712.7 462.5 L713.1 462.5 L713.1 388.5 L713.5 388.5 L713.5 353 L718.7 353 L718.7 426.5 L719.5 426.5 L719.5 499.5 L725.3 499.5 L725.3 426.5 L726 426.5 L726 353 L731.2 353 L731.2 426.5 L732 426.5 L732 499.5 L733.17 499.5 L734.37 501 L735.57 499.5 L736.8 499.5 L736.8 426.5 L737.5 426.5 L737.5 353 L739.28 353 L740.48 352 L741.68 353 L742.7 353 L742.7 388.5 L743.1 388.5 L743.1 462.5 L743.5 462.5 L743.5 499.5 L749.3 499.5 L749.3 426.5 L750 426.5 L750 353 L751.44 353 L752.64 351.5 L753.84 353 L755.2 353 L755.2 426.5 L756 426.5 L756 499.5 L759.7 499.5 L759.7 462.5 L760.1 462.5 L760.1 388.5 L760.5 388.5 L760.5 355.8 L765.7 355.8 L765.7 426.5 L766.5 426.5 L766.5 499.5 L772.3 499.5 L772.3 426.5 L773 426.5 L773 355.8 L773.99 355.8 L775.19 355.1 L776.39 355.8 L778.2 355.8 L778.2 426.5 L779 426.5 L779 499.5 L783.8 499.5 L783.8 426.5 L784.5 426.5 L784.5 355.8 L785.81 355.8 L787.01 354.3 L788.21 355.8 L789.7 355.8 L789.7 388.5 L790.1 388.5 L790.1 462.5 L790.5 462.5 L790.5 499.5 L796.8 499.5 L796.8 426.5 L797.5 426.5 L797.5 355.8 L799.82 355.8 L801.02 354.8 L802.22 355.8 L802.7 355.8 L802.7 426.5 L803.5 426.5 L803.5 499.5 L803.92 499.5 L805.12 501.5 L806.32 499.5 L807.7 499.5 L807.7 462.5 L808.1 462.5 L808.1 388.5 L808.5 388.5 L808.5 355.8 L810.9 355.8 L812.1 354.8 L813.3 355.8 L813.7 355.8 L813.7 426.5 L814.5 426.5 L814.5 499.5 L819.8 499.5 L819.8 426.5 L820.5 426.5 L820.5 355.8 L825.7 355.8 L825.7 426.5 L826.5 426.5 L826.5 499.5 L827.06 499.5 L828.26 501 L829.46 499.5 L831.8 499.5 L831.8 426.5 L832.5 426.5 L832.5 355.8 L834.77 355.8 L835.97 354.3 L837.17 355.8 L837.7 355.8 L837.7 388.5 L838.1 388.5 L838.1 462.5 L838.5 462.5 L838.5 499.5 L839.17 499.5 L840.37 501 L841.57 499.5 L843.8 499.5 L843.8 426.5 L844.5 426.5 L844.5 355.8 L849.7 355.8 L849.7 426.5 L850.5 426.5 L850.5 499.5 L852.11 499.5 L853.31 501 L854.51 499.5 L855.2 499.5 L855.2 462.5 L855.6 462.5 L855.6 388.5 L856 388.5 L856 355.8 L857 355.8 L858.2 354.8 L859.4 355.8 L861.2 355.8 L861.2 426.5 L862 426.5 L862 499.5 L864.03 499.5 L865.23 501 L866.43 499.5 L867.3 499.5 L867.3 426.5 L868 426.5 L868 355.8 L870.34 355.8 L871.54 355.1 L872.74 355.8 L873.2 355.8 L873.2 426.5 L874 426.5 L874 499.5 L878.8 499.5 L878.8 426.5 L879.5 426.5 L879.5 355.8 L880.62 355.8 L881.82 354.3 L883.02 355.8 L884.7 355.8 L884.7 388.5 L885.1 388.5 L885.1 462.5 L885.5 462.5 L885.5 499.5 L888.24 499.5 L889.44 500.5 L890.64 499.5 L891.3 499.5 L891.3 426.5 L892 426.5 L892 355.8 L893.24 355.8 L894.44 354.8 L895.64 355.8 L897.2 355.8 L897.2 426.5 L898 426.5 L898 499.5 L902.7 499.5 L902.7 462.5 L903.1 462.5 L903.1 388.5 L903.5 388.5 L903.5 355.8 L903.91 355.8 L905.11 354.8 L906.31 355.8 L908.7 355.8 L908.7 426.5 L909.5 426.5 L909.5 499.5 L915.3 499.5 L915.3 426.5 L916 426.5 L916 355.8 L918.44 355.8 L919.64 354.3 L920.84 355.8 L921.2 355.8 L921.2 426.5 L922 426.5 L922 499.5 L926.8 499.5 L926.8 426.5 L927.5 426.5 L927.5 355.8 L928.62 355.8 L929.82 354.3 L931.02 355.8 L932.7 355.8 L932.7 388.5 L933.1 388.5 L933.1 462.5 L933.5 462.5 L933.5 499.5 L938.3 499.5 L938.3 426.5 L939 426.5 L939 355.8 L944.2 355.8 L944.2 426.5 L945 426.5 L945 499.5 L951.2 499.5 L951.2 462.5 L951.6 462.5 L951.6 388.5 L952 388.5 L952 355.8 L957.2 355.8 L957.2 426.5 L958 426.5 L958 499.5 L962.8 499.5 L962.8 426.5 L963.5 426.5 L963.5 355.8 L965.38 355.8 L966.58 355.1 L967.78 355.8 L968.7 355.8 L968.7 426.5 L969.5 426.5 L969.5 499.5 L975.3 499.5 L975.3 356" fill="none" stroke="#00e0e0" stroke-width="1"/>
<!-- markers -->
<path d="M22 32.5L27 27.5H38V37.5H27Z" fill="#ff8800"/>
<path d="M29.6 29.8H35.3M32.5 29.8V36.4" stroke="#302000" stroke-width="1.2" fill="none"/>
<path d="M978 73.75L982.5 68.5H993V79H982.5Z" fill="#ffff00"/>
<path d="M985 71H990.5M987.7 71V77.5" stroke="#3a3a00" stroke-width="1.1" fill="none"/>
<path d="M6 337H16.2L21.6 342.5L16.2 348H6Z" fill="#f8c860"/>
<text x="10.4" y="347.6" font-size="11.5" font-weight="bold" fill="#000" font-family="Liberation Serif">6</text>
<path d="M6 496H16.5L22 501.25L16.5 506.5H6Z" fill="#00ffff"/>
<text x="10.4" y="506.2" font-size="11.5" font-weight="bold" fill="#000" font-family="Liberation Serif">2</text>
<path d="M6 563H16.5L22 568L16.5 573H6Z" fill="#1e88f0"/>
<text x="10.4" y="573" font-size="11.5" font-weight="bold" fill="#000" font-family="Liberation Serif">5</text>
<!-- bottom boxes -->
<rect x="23" y="572" width="82" height="17" fill="#000"/>
<text x="25" y="585" font-size="11" fill="#00dcd4" stroke="#00dcd4" stroke-width="0.15" textLength="22.2" lengthAdjust="spacingAndGlyphs">CH2</text>
<path d="M50 580.5H59" stroke="#00dcd4" stroke-width="1" stroke-dasharray="1 1.7" fill="none"/>
<path d="M50 583.5H59" stroke="#00dcd4" stroke-width="1" fill="none"/>
<text x="67" y="584.75" font-size="11" fill="#00dcd4" stroke="#00dcd4" stroke-width="0.15" textLength="27.75" lengthAdjust="spacingAndGlyphs">2.00V</text>
<rect x="122" y="572" width="81.5" height="17" fill="#000"/>
<text x="123.5" y="585" font-size="11" fill="#1e80e8" stroke="#1e80e8" stroke-width="0.15" textLength="21.5" lengthAdjust="spacingAndGlyphs">CH5</text>
<path d="M148 580.5H157" stroke="#1e80e8" stroke-width="1" stroke-dasharray="1 1.7" fill="none"/>
<path d="M148 583.5H157" stroke="#1e80e8" stroke-width="1" fill="none"/>
<text x="165" y="584.75" font-size="11" fill="#1e80e8" stroke="#1e80e8" stroke-width="0.15" textLength="27.5" lengthAdjust="spacingAndGlyphs">2.00V</text>
<rect x="220" y="572" width="81.5" height="17" fill="#000"/>
<rect x="220.5" y="574" width="24.5" height="14" fill="#f8c060"/>
<text x="221.5" y="585" font-size="11" fill="#202020" stroke="#202020" stroke-width="0.15" textLength="22" lengthAdjust="spacingAndGlyphs">CH6</text>
<path d="M246 580.5H256" stroke="#e8b050" stroke-width="1" stroke-dasharray="1 1.7" fill="none"/>
<path d="M246 583.5H256" stroke="#e8b050" stroke-width="1" fill="none"/>
<text x="263.5" y="584.75" font-size="11" fill="#e8b050" stroke="#e8b050" stroke-width="0.15" textLength="27.5" lengthAdjust="spacingAndGlyphs">5.00V</text>
</svg>
</body></html>
